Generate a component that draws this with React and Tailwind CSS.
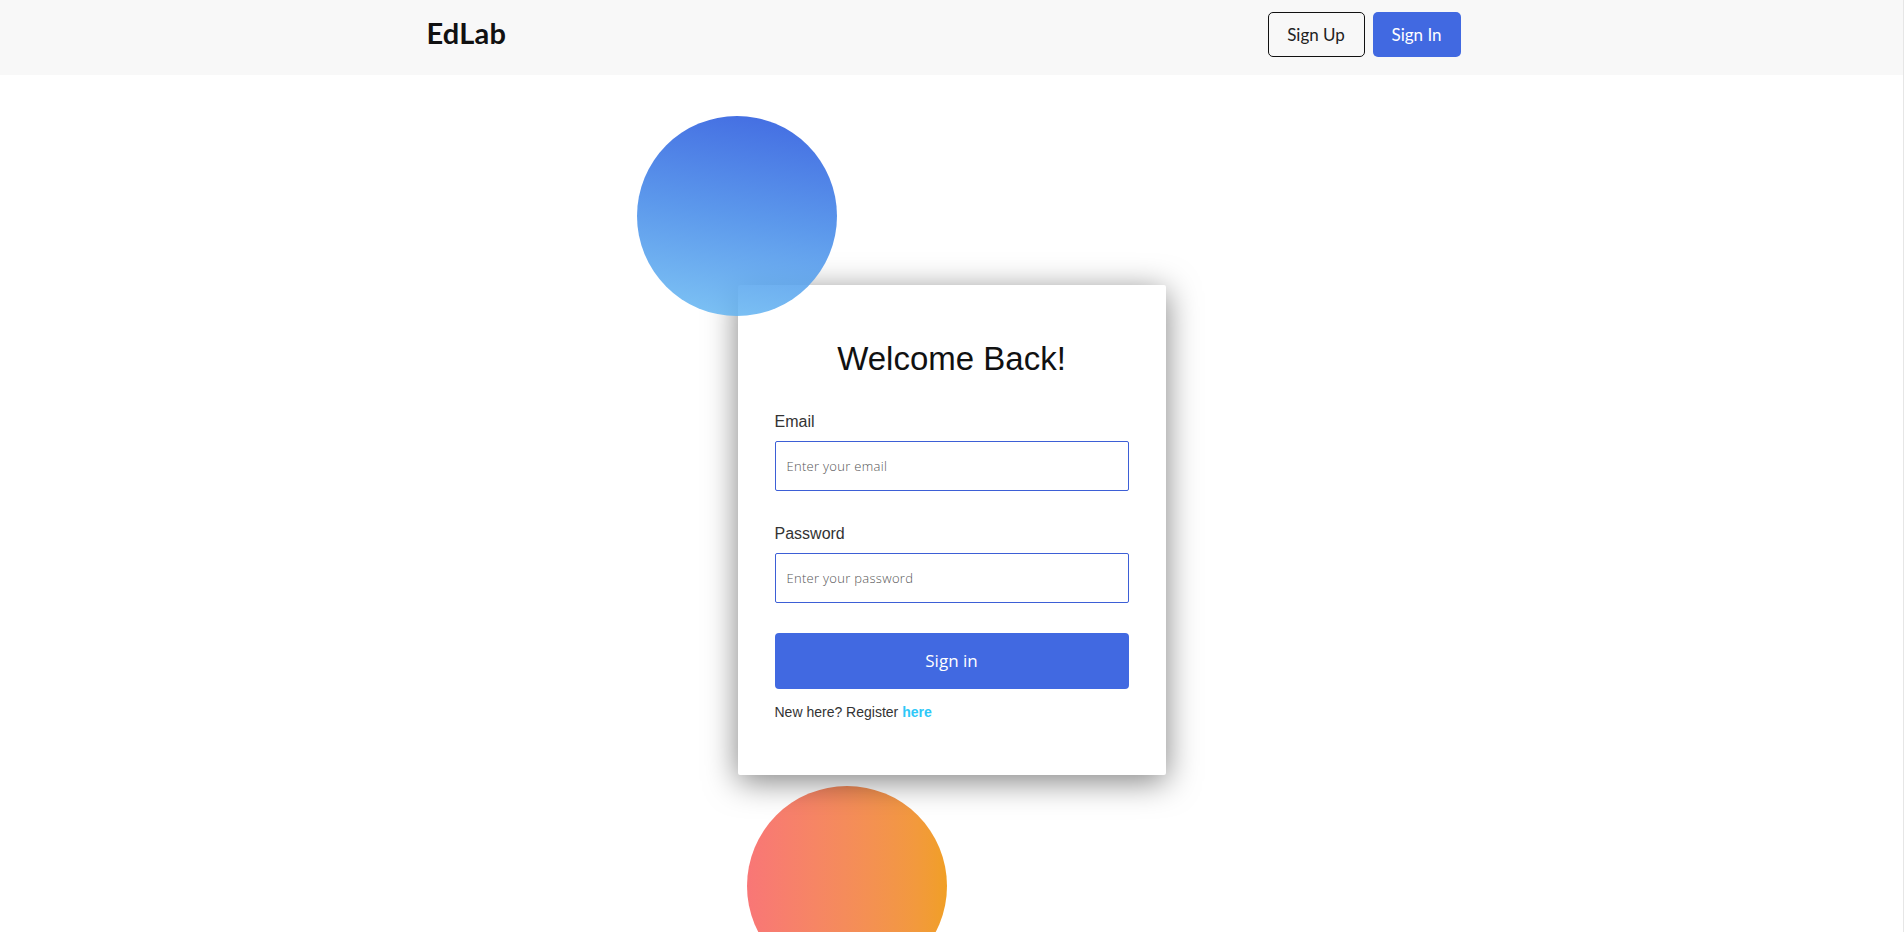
import React from "react";

export default function App() {
  return (
    <div className="min-h-screen bg-white border-r border-[#e6e6e6] font-['Liberation_Sans',Arial,sans-serif]">
      <header className="h-[75px] bg-[#f8f8f8] pr-4">
        <div className="mx-auto w-[1034px] h-full flex items-start justify-between">
          <div className="mt-[15px] font-['Lato',sans-serif] font-bold text-[29px] leading-[35px] text-[#111] tracking-[0.2px]">
            EdLab
          </div>
          <div className="mt-[12px] flex items-center gap-2">
            <button className="w-[97px] h-[45px] rounded-[5px] border border-[#111] text-[#222] font-['Lato',sans-serif] text-[17px]">
              Sign Up
            </button>
            <button className="w-[88px] h-[45px] rounded-[5px] bg-[#4169e1] text-white font-['Lato',sans-serif] text-[17px]">
              Sign In
            </button>
          </div>
        </div>
      </header>

      <main className="mx-auto w-[428px] flex flex-col">
        <div className="relative z-10 w-[200px] h-[200px] rounded-full -ml-[101px] mt-[41px] opacity-85 bg-linear-[190deg] from-[#204fdc] via-[#3f86e8] to-[#69bcf3]" />

        <div className="relative z-[5] -mt-[31px] bg-white rounded-[2px] shadow-[0_6px_32px_rgba(0,0,0,0.5)] px-[37px] pt-[57px] pb-[56px] flex flex-col">
          <h1 className="text-[33px] leading-[33px] text-[#111] text-center">Welcome Back!</h1>

          <label className="mt-[39px] text-[16px] leading-[16px] text-[#333]">Email</label>
          <input
            type="email"
            placeholder="Enter your email"
            className="mt-[11px] h-[50px] border border-[#3d5fd6] rounded-[2px] px-[11px] font-['Open_Sans',sans-serif] font-light text-[13px] tracking-[0.3px] placeholder:text-[#555] outline-none"
          />

          <label className="mt-[35px] text-[16px] leading-[16px] text-[#333]">Password</label>
          <input
            type="password"
            placeholder="Enter your password"
            className="mt-[11px] h-[50px] border border-[#3d5fd6] rounded-[2px] px-[11px] font-['Open_Sans',sans-serif] font-light text-[13px] tracking-[0.3px] placeholder:text-[#555] outline-none"
          />

          <button className="mt-[30px] h-[56px] rounded-[4px] bg-[#4169e1] text-white font-['Open_Sans',sans-serif] text-[17px]">
            Sign in
          </button>

          <p className="mt-[16px] text-[14px] leading-[14px] text-[#333]">
            New here? Register <a href="#" className="font-bold text-[#2ec8f8]">here</a>
          </p>
        </div>

        <div className="w-[200px] h-[200px] rounded-full ml-[9px] mt-[11px] opacity-95 bg-linear-to-r from-[#f86f6f] to-[#f09a19]" />
      </main>
    </div>
  );
}
